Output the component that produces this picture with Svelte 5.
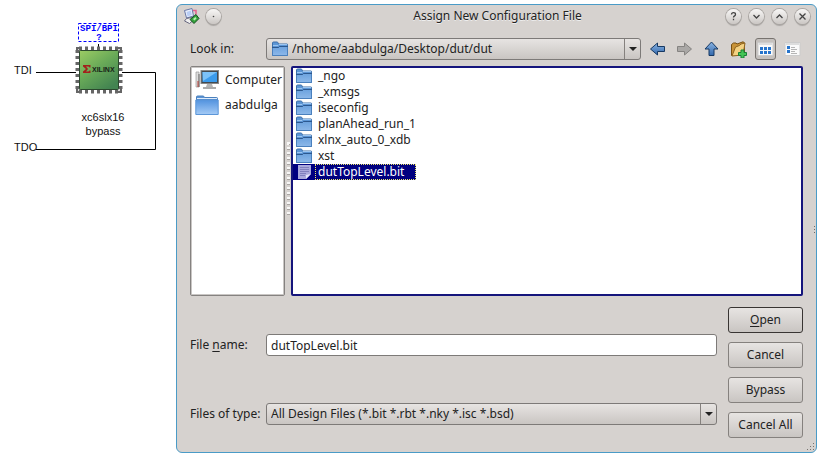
<script>
  let path = $state('/nhome/aabdulga/Desktop/dut/dut');
  let fileName = $state('dutTopLevel.bit');
  let filter = $state('All Design Files (*.bit *.rbt *.nky *.isc *.bsd)');
  let selected = $state('dutTopLevel.bit');
  let view = $state('list');

  const folders = ['_ngo', '_xmsgs', 'iseconfig', 'planAhead_run_1', 'xlnx_auto_0_xdb', 'xst'];
  const windowButtons = [
    { label: 'Help', d: 'M5.5 5.5q0-1.8 2-1.8t2 1.7q0 1-1.2 1.7-.8.5-.8 1.3M7.5 9.800v1.400' },
    { label: 'Minimize', d: 'M4.5 6l3 3 3-3' },
    { label: 'Maximize', d: 'M4.5 9l3-3 3 3' },
    { label: 'Close', d: 'M4.5 4.5l6 6M10.5 4.5l-6 6' }
  ];
</script>

{#snippet folder()}
  <svg class="icon" width="16" height="16" viewBox="0 0 16 16" aria-hidden="true">
    <path d="M.5 14.5V2Q.5 1 1.5 1H5q.8 0 1 .8L6.500 3H15q.6 0 .6.6V14.5z" fill="#5c96d6" stroke="#3c6fa9" />
    <path d="M1 4.500h5l1-1h8" stroke="#9dc5ef" fill="none" />
    <path d="M.5 6.500h6l1-1h8v9H.5z" fill="url(#folderFill)" stroke="#4a80bd" />
    <path d="M0 6.500h6.500l1-1H16" fill="none" stroke="#2c588f" />
  </svg>
{/snippet}

<main>
  <svg class="chain" width="176" height="170" viewBox="0 0 176 170" role="img" aria-label="Boundary scan chain">
    <defs>
      <linearGradient id="chipFill" x1="0" y1="0" x2=".7" y2="1">
        <stop offset="0" stop-color="#9ccc64" /><stop offset=".5" stop-color="#69aa58" /><stop offset="1" stop-color="#438451" />
      </linearGradient>
      <linearGradient id="folderFill" x1="0" y1="0" x2="0" y2="1">
        <stop offset="0" stop-color="#6ca2de" /><stop offset="1" stop-color="#8db8e9" />
      </linearGradient>
      <linearGradient id="bigFolder" x1="0" y1="0" x2="0" y2="1">
        <stop offset="0" stop-color="#5293df" /><stop offset="1" stop-color="#a5cbf6" />
      </linearGradient>
      <linearGradient id="arrowFill" x1="0" y1="0" x2="0" y2="1">
        <stop offset="0" stop-color="#8bb4e2" /><stop offset="1" stop-color="#3369ad" />
      </linearGradient>
    </defs>
    <rect x="78.500" y="23.500" width="40" height="18" fill="none" stroke="#00f" stroke-dasharray="3 2" />
    <g class="flash" text-anchor="middle">
      <text x="99" y="31">SPI/BPI</text>
      <text x="99" y="40">?</text>
    </g>
    <path d="M98.500 44v5M36 72.500h41M121 72.500h34.500v77H36" fill="none" stroke="#000" />
    <path d="M77 48h44v44H77z" fill="#ddd" stroke="#666" stroke-width="2" />
    <path d="M82 48.500h36M82 91.500h36M77.500 53v36M120.500 53v36" stroke="#fff" stroke-width="3" stroke-dasharray="3 3" />
    <path d="M79 48.500h40M79 91.500h40M77.500 50v40M120.500 50v40" stroke="#666" stroke-width="4" stroke-dasharray="3 3" />
    <rect x="79.500" y="50.500" width="39" height="39" rx="1" fill="url(#chipFill)" stroke="#2b482d" />
    <path d="M83 65h7.500v2.500h-1l-1-1H86l2 2.500-2 2.500h2.500l1-1h1V73H83v-1.500l3-2.500-3-2.500z" fill="#a3201c" />
    <text class="brand" x="92" y="72">XILINX</text>
    <g class="caption">
      <text x="14" y="74">TDI</text>
      <text x="14" y="151">TDO</text>
      <text x="103" y="121" text-anchor="middle">xc6slx16</text>
      <text x="103" y="135" text-anchor="middle">bypass</text>
    </g>
  </svg>

  <section class="dialog" role="dialog" aria-labelledby="dialog-title">
    <header>
      <svg width="17" height="17" viewBox="0 0 17 17" aria-hidden="true">
        <path d="M1.500 2.500l7.500-2 1.500 7.500-7 2z" fill="#e9effd" stroke="#6878a6" />
        <path d="M3.500 4l4.500-1.500.8 4.500-4.300 1.500z" fill="#b9cef5" />
        <path d="M1.500 13l2-2.500 5-1 2 2.500-4 3.500z" fill="#eee" stroke="#686880" />
        <path d="M10 2.500h3v4" fill="none" stroke="#e2618d" stroke-width="1.500" />
        <path d="M7 11.500l6-5 3 4-5 5z" fill="#34a43c" stroke="#164f20" />
        <path d="M10 11l2.500-2 1 1.500-2 2z" fill="#baf0b0" />
      </svg>
      <button class="round" aria-label="Window menu"><svg width="15" height="15" viewBox="0 0 15 15"><circle cx="7.500" cy="7.500" r=".8" fill="#444" /></svg></button>
      <h1 id="dialog-title">Assign New Configuration File</h1>
      <div class="window-buttons">
        {#each windowButtons as b}
          <button class="round" aria-label={b.label}>
            <svg width="15" height="15" viewBox="0 0 15 15"><path d={b.d} fill="none" stroke="#444" stroke-width="1.300" /></svg>
          </button>
        {/each}
      </div>
    </header>

    <div class="look-row">
      <label for="look-in">Look in:</label>
      <div class="combo with-icon">
        {@render folder()}
        <select id="look-in" bind:value={path}><option>/nhome/aabdulga/Desktop/dut/dut</option></select>
        <span class="drop"></span>
      </div>
      <button class="tool" aria-label="Back">
        <svg width="17" height="17" viewBox="0 0 17 17"><path d="M1.500 8l7-6v3.500h7v5h-7V14z" fill="url(#arrowFill)" stroke="#173963" stroke-linejoin="round" /></svg>
      </button>
      <button class="tool" aria-label="Forward">
        <svg width="17" height="17" viewBox="0 0 17 17"><path d="M15.500 8l-7-6v3.500h-7v5h7V14z" fill="#aaa8a6" stroke="#858381" stroke-linejoin="round" /></svg>
      </button>
      <button class="tool" aria-label="Parent directory">
        <svg width="17" height="17" viewBox="0 0 17 17"><path d="M8.500 1l6.500 7h-4v6.500H6V8H2z" fill="url(#arrowFill)" stroke="#173963" stroke-linejoin="round" /></svg>
      </button>
      <button class="tool" aria-label="Create new folder">
        <svg width="17" height="17" viewBox="0 0 17 17">
          <path d="M1.500 14.500v-11l2-1.500h2.500l1 1L13 .8l1.500 1V13z" fill="#c99337" stroke="#775114" />
          <path d="M2 15l3.500-9 4-1.500L11 3l4-1-2 12z" fill="#f4d181" stroke="#8e6420" />
          <path d="M11 9h3v2.500h2.500v3H14V17h-3v-2.500H8.500v-3H11z" fill="#43c454" stroke="#188037" />
        </svg>
      </button>
      <button class="tool" class:active={view === 'list'} aria-label="List view" onclick={() => (view = 'list')}>
        <svg width="17" height="17" viewBox="0 0 17 17">
          <path d="M1 1.500h15v13H1z" fill="#fafafa" stroke="#ccc" /><path d="M2 3h13" stroke="#ddd" stroke-width="2" />
          <path d="M3 7.500h11M3 11.500h11" stroke="#2674cc" stroke-width="3" stroke-dasharray="3 1" />
        </svg>
      </button>
      <button class="tool" class:active={view === 'detail'} aria-label="Detail view" onclick={() => (view = 'detail')}>
        <svg width="17" height="17" viewBox="0 0 17 17">
          <path d="M1 1.500h15v13H1z" fill="#fafafa" stroke="#ccc" /><path d="M2 3h13" stroke="#ddd" stroke-width="2" />
          <path d="M3 6.500h3M3 10.500h3" stroke="#2674cc" stroke-width="3" />
          <path d="M7 6.500h4M7 8.500h6M7 10.500h4M7 12.500h6" stroke="#b5b5b5" />
        </svg>
      </button>
    </div>

    <div class="panes">
      <nav class="places" aria-label="Places">
        <button>
          <svg width="24" height="22" viewBox="0 0 24 22" aria-hidden="true">
            <path d="M1 3h3v15H1z" fill="#ddd" stroke="#999" stroke-width=".7" /><path d="M4 5v13" stroke="#666" /><path d="M3 12v6" stroke="#b43a32" />
            <rect x="6" y="1.500" width="17.500" height="13" fill="#434a50" stroke="#888" />
            <rect x="7.500" y="3" width="14.500" height="10" fill="#3b9bec" /><path d="M7.500 3H22L8 12z" fill="#7cc2f8" />
            <path d="M12 15h5l1 3h-7z" fill="#b5b5b5" /><path d="M8 19h13" stroke="#aaa" stroke-width="2" />
          </svg>
          <span>Computer</span>
        </button>
        <button>
          <svg width="24" height="22" viewBox="0 0 24 22" aria-hidden="true">
            <path d="M1.500 5V3q0-1 1-1h6l1 1.500h12q1 0 1 1V6h-21z" fill="#5b94d5" stroke="#4a80bd" />
            <path d="M2 4.500h20" stroke="#deebfb" />
            <path d="M.8 6h22.400v14.500H.8z" fill="url(#bigFolder)" stroke="#5c96d8" />
          </svg>
          <span>aabdulga</span>
        </button>
      </nav>
      <div class="splitter"></div>
      <ul class="files" aria-label="Files">
        {#each folders as name}
          <li>
            <button class:selected={selected === name} onclick={() => (selected = name)}>
              {@render folder()}<span>{name}</span>
            </button>
          </li>
        {/each}
        <li>
          <button class:selected={selected === 'dutTopLevel.bit'} onclick={() => (selected = 'dutTopLevel.bit')}>
            <svg class="icon" width="16" height="16" viewBox="0 0 16 16" aria-hidden="true">
              <path d="M2 1h13v9l-5 5H2z" fill="#aaa9dc" />
              <path d="M4 3.500h9M4 5.500h9M4 7.500h9M4 9.500h6M4 11.500h5" stroke="#8180bd" />
              <path d="M10 15v-4l5-1z" fill="#e6e6fa" />
            </svg>
            <span>dutTopLevel.bit</span>
          </button>
        </li>
      </ul>
    </div>

    <div class="bottom">
      <div class="form">
        <div class="field">
          <label for="file-name">File <u>n</u>ame:</label>
          <input id="file-name" type="text" bind:value={fileName} />
        </div>
        <div class="field">
          <label for="file-type">Files of type:</label>
          <div class="combo">
            <select id="file-type" bind:value={filter}><option>All Design Files (*.bit *.rbt *.nky *.isc *.bsd)</option></select>
            <span class="drop"></span>
          </div>
        </div>
      </div>
      <div class="actions">
        <button class="default"><span><u>O</u>pen</span></button>
        <button>Cancel</button>
        <button>Bypass</button>
        <button>Cancel All</button>
      </div>
    </div>
    <svg class="edge" width="2" height="8" viewBox="0 0 2 8" aria-hidden="true">
      <path d="M0 1.500h1M0 4.500h1M0 7.500h1" stroke="#6d6966" />
    </svg>
    <svg class="grip" width="8" height="8" viewBox="0 0 8 8" aria-hidden="true">
      <path d="M6 .5h1M3 3.500h1M6 3.500h1M0 6.500h1M3 6.500h1M6 6.500h1" stroke="#77736f" />
    </svg>
  </section>
</main>

<style>
  :global(body) { margin: 0; background: #fff; }
  main { display: flex; align-items: flex-start; padding: 4px 8px 7px 0; }
  .chain { flex: none; margin-top: -4px; }
  .caption { font: 11px "Liberation Sans", Arial, sans-serif; fill: #111; }
  .flash { font: bold 9px "Liberation Mono", monospace; fill: #00f; }
  .brand { font: bold 7px "Liberation Sans", sans-serif; fill: #172317; }

  .dialog {
    position: relative; box-sizing: border-box; flex: 1; min-width: 0;
    padding: 0 13px 14px; border: 1px solid #4a9bc7; border-radius: 6px;
    background: #d6d2cf; color: #222;
    font: 12px/16px "Noto Sans", "Open Sans", sans-serif;
  }
  button, input, select { font: inherit; color: inherit; margin: 0; }
  button { padding: 0; border: 0; background: none; }
  u { text-underline-offset: 2px; }

  header { display: flex; align-items: center; height: 22px; margin: 0 -7px 11px; }
  header > .round { margin-left: 6px; }
  h1 { flex: 1; margin: 0; padding-left: 48px; text-align: center; font: inherit; text-shadow: 0 1px #eee; }
  .window-buttons { display: flex; gap: 8px; }
  .round {
    display: flex; width: 15px; height: 15px; border-radius: 50%;
    background: linear-gradient(#f8f7f6, #cbc7c4); box-shadow: 0 0 0 1px #aaa6a3, 0 2px 1px #aaa6a3;
  }

  .look-row { display: flex; align-items: center; gap: 6px; }
  label { flex: none; width: 76px; white-space: nowrap; }
  .look-row label { width: 70px; }
  .combo {
    position: relative; display: flex; align-items: center; flex: 1; min-width: 0; height: 22px; box-sizing: border-box;
    border: 1px solid #7d7a78; border-radius: 3px; background: linear-gradient(#e7e4e2, #c9c5c2);
  }
  .combo select {
    flex: 1; min-width: 0; height: 20px; padding: 0 20px 0 4px; appearance: none;
    border: 0; background: none; outline: none;
  }
  .with-icon { padding-left: 5px; }
  .with-icon select { padding-left: 1px; }
  .drop {
    position: absolute; top: 0; right: 0; bottom: 0; width: 15px; border-left: 1px solid #85817e;
    display: flex; align-items: center; justify-content: center; pointer-events: none;
  }
  .drop::before { content: ""; border: 4px solid transparent; border-top-color: #222; border-bottom: 0; }
  .tool { flex: none; display: flex; align-items: center; justify-content: center; width: 21px; height: 22px; box-sizing: border-box; }
  .tool svg { flex: none; }
  .active { border: 1px solid #77736f; border-radius: 3px; background: #c5c1be; }

  .panes { display: flex; height: 230px; margin-top: 6px; }
  .places, .files { box-sizing: border-box; background: #fff; border-radius: 2px; }
  .places { flex: none; width: 95px; padding: 0 4px; border: 1px solid #858280; box-shadow: inset 0 0 0 1px #c9c6c4; }
  .places button { display: flex; align-items: center; gap: 6px; height: 25px; white-space: nowrap; }
  .splitter {
    align-self: center; width: 6px; height: 75px; margin-top: -4px;
    background:
      linear-gradient(#f8f7f6, #f8f7f6) 2px 1px / 2px 2px no-repeat,
      repeating-linear-gradient(#f8f7f6 0 2px, #a9a5a2 2px 3px, transparent 3px 5px) 2px 0 / 3px 100% no-repeat;
  }
  .files { flex: 1; min-width: 0; margin: 0; padding: 0; border: 2px solid #15157c; list-style: none; }
  .files li { display: flex; height: 16px; }
  .files button { display: flex; align-items: center; padding-left: 3px; }
  .files span { line-height: 14px; padding: 0 11px 0 2px; border: 1px solid transparent; }
  .files .selected { background: #000080; color: #fff; }
  .files .selected span { border: 1px dotted #eee86a; }
  .icon { flex: none; margin-right: 3px; }

  .bottom { display: flex; gap: 11px; margin-top: 11px; }
  .form { flex: 1; min-width: 0; display: flex; flex-direction: column; gap: 47px; padding-top: 27px; }
  .field { display: flex; align-items: center; }
  input {
    flex: 1; min-width: 0; height: 22px; box-sizing: border-box; padding: 0 4px;
    border: 1px solid #7d7a78; border-radius: 3px; background: #fff; outline: none;
  }
  .actions { flex: none; display: flex; flex-direction: column; gap: 9px; width: 75px; }
  .actions button {
    height: 26px; border: 1px solid #85817e; border-radius: 3px;
    background: linear-gradient(#e7e4e2, #c9c5c2);
  }
  .actions .default { border-color: #393533; }
  .edge { position: absolute; right: 0; top: 50%; margin-top: -4px; }
  .grip { position: absolute; right: 1px; bottom: 1px; }
</style>
